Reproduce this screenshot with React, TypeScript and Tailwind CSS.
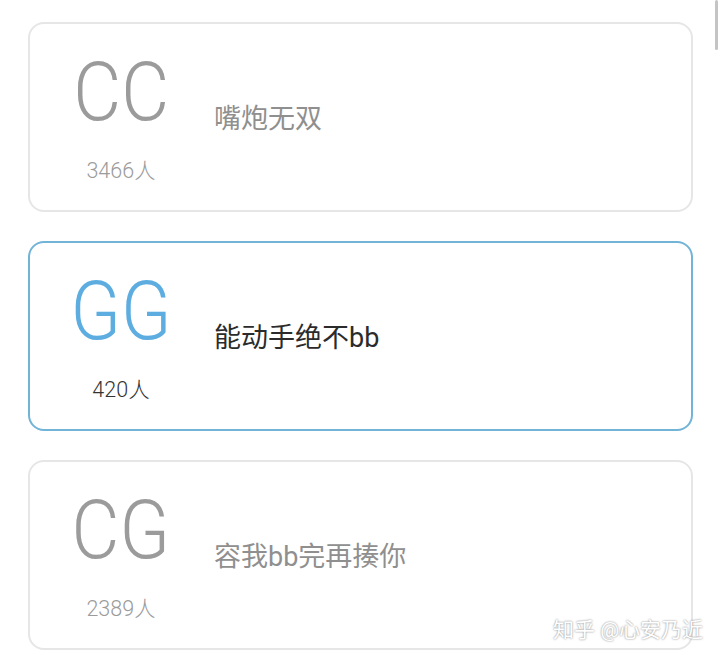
import React from "react"

type Team = {
  code: string
  count: string
  motto: string
  active?: boolean
}

const teams: Team[] = [
  { code: "CC", count: "3466人", motto: "嘴炮无双" },
  { code: "GG", count: "420人", motto: "能动手绝不bb", active: true },
  { code: "CG", count: "2389人", motto: "容我bb完再揍你" },
]

function TeamCard({ team }: { team: Team }) {
  const border = team.active ? "border-[#72b4d8]" : "border-[#e6e6e6]"
  const codeColor = team.active ? "text-[#5eade0]" : "text-[#9b9b9b]"
  const countColor = team.active ? "text-[#333333]" : "text-[#9b9b9b]"
  const mottoColor = team.active ? "text-[#2b2b2b]" : "text-[#8f8f8f]"

  return (
    <div className={`flex h-[190px] items-center rounded-[16px] border-2 bg-white ${border}`}>
      <div className="flex h-full w-[182px] flex-col items-center pt-[27px]">
        <div className={`scale-x-[0.9] text-[82px] font-light leading-[82px] ${codeColor}`}>{team.code}</div>
        <div className={`mt-[24px] text-[21.5px] font-light leading-[28px] ${countColor}`}>{team.count}</div>
      </div>
      <div className={`ml-[2px] mt-[4px] text-[27px] leading-[34px] ${mottoColor}`}>{team.motto}</div>
    </div>
  )
}

export default function App() {
  return (
    <div
      className="relative h-[661px] w-[720px] overflow-hidden bg-white"
      style={{ fontFamily: "Roboto, 'Noto Sans CJK SC', sans-serif" }}
    >
      <div className="flex flex-col gap-[29px] pl-[28px] pr-[27px] pt-[22px]">
        {teams.map((t) => (
          <TeamCard key={t.code} team={t} />
        ))}
      </div>

      {/* scrollbar */}
      <div className="absolute right-[2px] top-0 h-[50px] w-[3px] rounded-full bg-[#c4c4c4]" />

      {/* watermark */}
      <div className="absolute bottom-[18px] right-[17px] text-[21px] leading-[26px] text-white [text-shadow:0_0_2px_rgba(0,0,0,0.55)]">
        知乎 @心安乃近
      </div>
    </div>
  )
}
